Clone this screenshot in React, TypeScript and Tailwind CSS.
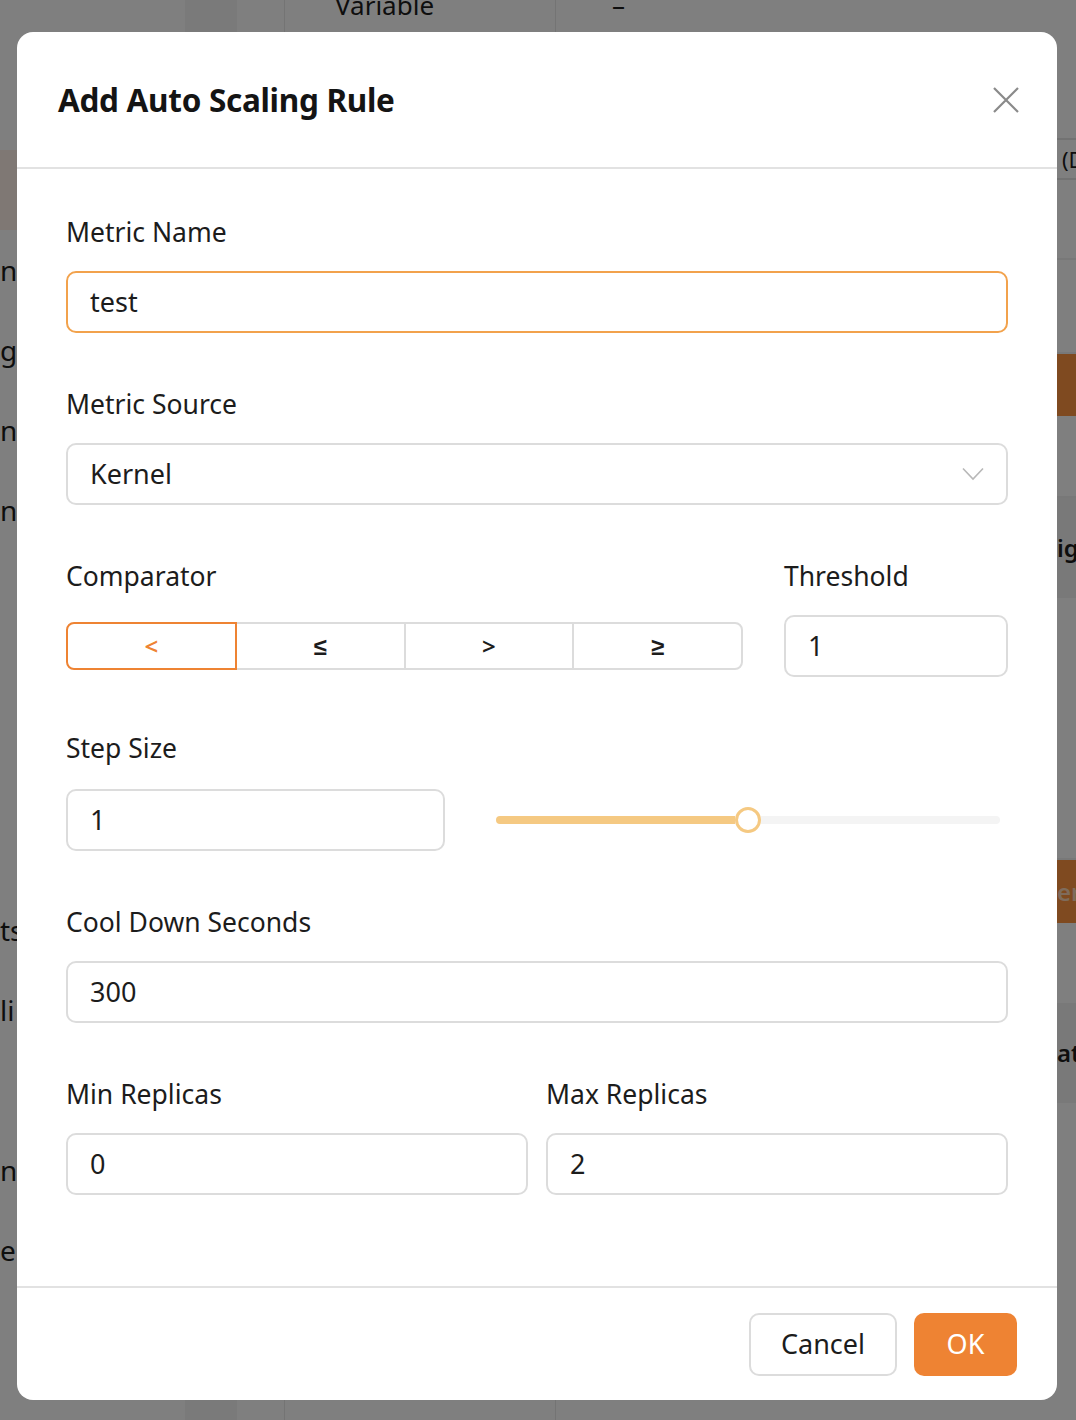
import { useState } from "react";

const ops = ["<", "≤", ">", "≥"];

function Field({ label, value, focused }: { label: string; value: string; focused?: boolean }) {
  return (
    <div className="flex flex-col">
      <label className="h-9 text-[26.5px] leading-9 text-[#1c1c1c]">{label}</label>
      <div
        className={
          "mt-[21px] flex h-[62px] items-center rounded-[10px] border-2 px-[22px] text-[27px] text-[#1c1c1c] " +
          (focused ? "border-[#f2a24c]" : "border-[#dcdcdc]")
        }
      >
        {value}
      </div>
    </div>
  );
}

function Backdrop() {
  return (
    <div className="flex h-full w-full text-[24px] font-semibold text-[#1c1c1c]">
      <div className="flex w-[185px] shrink-0 flex-col whitespace-nowrap pt-[150px] text-[28px] font-normal">
        <div className="h-[80px] bg-[#fff0e8]" />
        <div className="flex h-[80px] items-center">n</div>
        <div className="flex h-[80px] items-center">g</div>
        <div className="flex h-[80px] items-center">ne</div>
        <div className="flex h-[80px] items-center">na</div>
        <div className="h-[340px]" />
        <div className="flex h-[80px] items-center">ts</div>
        <div className="flex h-[80px] items-center">li</div>
        <div className="h-[80px]" />
        <div className="flex h-[80px] items-center">n</div>
        <div className="flex h-[80px] items-center">e</div>
      </div>
      <div className="flex flex-1">
        <div className="w-[52px] bg-[#f4f4f4]" />
        <div className="w-[48px] border-r border-[#e8e8e8]" />
        <div className="-mt-[8px] w-[271px] border-r border-[#e8e8e8] pl-[50px] text-[26px] font-normal leading-[26px]">
          Variable
        </div>
        <div className="-mt-[8px] flex-1 pl-[56px] text-[26px] font-normal leading-[26px]">–</div>
      </div>
      <div className="flex w-[19px] shrink-0 flex-col overflow-hidden whitespace-nowrap">
        <div className="h-[140px] border-b-2 border-[#e4e4e4]" />
        <div className="flex h-[40px] items-center border-b-2 border-[#e4e4e4] pl-[5px] text-[22px] font-normal">(D</div>
        <div className="h-[80px] border-b-2 border-[#f0f0f0]" />
        <div className="h-[94px] border-b-2 border-[#f0f0f0]" />
        <div className="h-[62px] bg-[#ff9540]" />
        <div className="h-[82px] border-b-2 border-[#f0f0f0]" />
        <div className="flex h-[100px] items-center bg-[#f2f2f2]">ig</div>
        <div className="h-[262px] border-b-2 border-[#f0f0f0]" />
        <div className="flex h-[63px] items-center bg-[#ff9540] text-[#ffd9b8]">er</div>
        <div className="h-[80px]" />
        <div className="flex h-[100px] items-center bg-[#f2f2f2]">at</div>
      </div>
    </div>
  );
}

export default function App() {
  const [op, setOp] = useState(0);

  return (
    <div className="relative h-[1420px] w-[1076px] overflow-hidden bg-white font-['Noto_Sans',sans-serif]">
      <Backdrop />
      <div className="absolute inset-0 bg-black/50" />

      <div className="absolute left-[17px] top-[32px] flex h-[1368px] w-[1040px] flex-col rounded-2xl bg-white">
        <div className="flex h-[137px] shrink-0 items-center justify-between border-b-2 border-[#e2e2e2] pl-[41px] pr-[38px]">
          <h2 className="text-[31.5px] font-bold tracking-[-0.3px] text-[#141414]">Add Auto Scaling Rule</h2>
          <button aria-label="Close" className="text-[#8a8a8a]">
            <svg width="26" height="26" viewBox="0 0 26 26" fill="none" stroke="currentColor" strokeWidth="2.2">
              <path d="M1 1L25 25M25 1L1 25" />
            </svg>
          </button>
        </div>

        <div className="flex flex-1 flex-col gap-[53px] px-[49px] pt-[45px]">
          <Field label="Metric Name" value="test" focused />

          <div className="flex flex-col">
            <label className="h-9 text-[26.5px] leading-9 text-[#1c1c1c]">Metric Source</label>
            <div className="mt-[21px] flex h-[62px] items-center justify-between rounded-[10px] border-2 border-[#dcdcdc] px-[22px] text-[27px] text-[#1c1c1c]">
              <span>Kernel</span>
              <svg width="22" height="14" viewBox="0 0 22 14" fill="none" stroke="#b8b8b8" strokeWidth="1.6">
                <path d="M1 1.5L11 12L21 1.5" />
              </svg>
            </div>
          </div>

          <div className="flex gap-[41px]">
            <div className="flex w-[677px] flex-col">
              <label className="h-9 text-[26.5px] leading-9 text-[#1c1c1c]">Comparator</label>
              <div className="mt-[21px] flex h-[62px] items-center">
                <div className="flex h-[48px] w-full">
                  {ops.map((o, i) => (
                    <button
                      key={o}
                      onClick={() => setOp(i)}
                      className={
                        "flex flex-1 items-center justify-center border-2 text-[24px] font-semibold " +
                        (i === 0 ? "rounded-l-[8px] " : "-ml-[2px] ") +
                        (i === 3 ? "rounded-r-[8px] " : "") +
                        (op === i ? "relative z-10 border-[#ee8333] text-[#ee8333]" : "border-[#dcdcdc] text-[#1c1c1c]")
                      }
                    >
                      {o}
                    </button>
                  ))}
                </div>
              </div>
            </div>
            <div className="flex-1">
              <Field label="Threshold" value="1" />
            </div>
          </div>

          <div className="flex flex-col">
            <label className="h-9 text-[26.5px] leading-9 text-[#1c1c1c]">Step Size</label>
            <div className="mt-[23px] flex items-center gap-[51px]">
              <div className="flex h-[62px] w-[379px] items-center rounded-[10px] border-2 border-[#dcdcdc] px-[22px] text-[27px] text-[#1c1c1c]">
                1
              </div>
              <div className="flex h-[26px] w-[504px] items-center">
                <div className="h-[8px] w-[239px] rounded-l-full bg-[#f5c982]" />
                <div className="h-[26px] w-[26px] shrink-0 rounded-full border-[3px] border-[#f5c982] bg-white" />
                <div className="h-[8px] flex-1 rounded-r-full bg-[#f4f4f4]" />
              </div>
            </div>
          </div>

          <Field label="Cool Down Seconds" value="300" />

          <div className="grid grid-cols-2 gap-[18px]">
            <Field label="Min Replicas" value="0" />
            <Field label="Max Replicas" value="2" />
          </div>
        </div>

        <div className="flex h-[114px] shrink-0 items-start justify-end gap-[17px] border-t-2 border-[#e2e2e2] pr-[40px] pt-[25px]">
          <button className="h-[63px] w-[148px] rounded-[10px] border-2 border-[#dcdcdc] text-[27px] text-[#1c1c1c]">
            Cancel
          </button>
          <button className="h-[63px] w-[103px] rounded-[10px] bg-[#ee8333] text-[27px] text-white">OK</button>
        </div>
      </div>
    </div>
  );
}
